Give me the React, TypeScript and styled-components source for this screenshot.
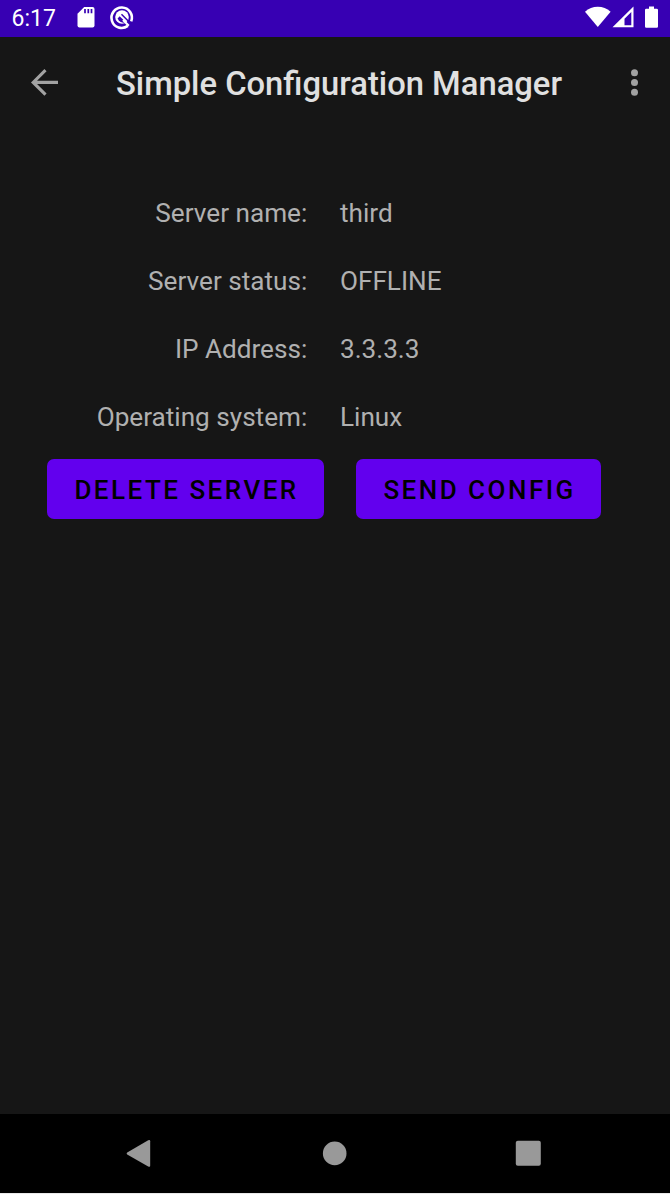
import React from "react";
import styled, { createGlobalStyle } from "styled-components";

const GlobalStyle = createGlobalStyle`
  * { box-sizing: border-box; }
  body { margin: 0; background: #e9e9e9; font-family: Roboto, sans-serif; }
`;

const Screen = styled.div`
  width: 670px;
  height: 1193px;
  display: flex;
  flex-direction: column;
  background: #161616;
  overflow: hidden;
`;

const StatusBar = styled.header`
  height: 37px;
  flex: none;
  display: flex;
  justify-content: space-between;
  background: #3700b3;
  color: #fff;
`;

const Clock = styled.span`
  width: 66px;
  padding-left: 11.5px;
  font-size: 23px;
  line-height: 37px;
`;

const StatusGroup = styled.div`
  display: flex;
`;

const AppBar = styled.div`
  height: 92px;
  flex: none;
  display: flex;
  align-items: center;
  justify-content: space-between;
  padding: 0 15px 2px 24px;
`;

const IconButton = styled.button`
  width: 40px;
  height: 40px;
  padding: 0;
  border: 0;
  background: none;
  color: #a2a2a2;
`;

const Title = styled.h1`
  flex: 1;
  margin: 0 0 0 52px;
  padding-top: 3px;
  color: #e0e0e0;
  font-size: 32.75px;
  line-height: 40px;
  font-weight: 500;
  white-space: nowrap;
`;

const Content = styled.main`
  flex: 1;
  padding-top: 49.5px;
`;

const Details = styled.dl`
  margin: 0;
  display: grid;
  grid-template-columns: 307.3px 1fr;
  grid-auto-rows: 68.1px;
  column-gap: 32.7px;
  color: #b0b0b0;
  font-size: 26.15px;
  line-height: 68px;
`;

const Label = styled.dt`
  text-align: right;
`;

const Value = styled.dd`
  margin: 0;
`;

const Actions = styled.div`
  display: flex;
  gap: 32.5px;
  padding: 8.1px 0 0 47.4px;
`;

const ActionButton = styled.button<{ $width: number }>`
  width: ${(p) => p.$width}px;
  height: 60px;
  padding: 3px 0 0 27px;
  border: 0;
  border-radius: 7px;
  background: #6200ee;
  color: #000;
  font: 500 26px Roboto, sans-serif;
  letter-spacing: 2.48px;
  text-align: left;
  white-space: nowrap;
`;

const NavBar = styled.nav`
  height: 79px;
  flex: none;
  display: flex;
  align-items: center;
  justify-content: space-between;
  padding: 0 122px 0 119px;
  background: #000;
`;

const NavButton = styled(IconButton)`
  color: #999;
`;

const details = [
  ["Server name:", "third"],
  ["Server status:", "OFFLINE"],
  ["IP Address:", "3.3.3.3"],
  ["Operating system:", "Linux"],
];

export default function App() {
  return (
    <>
      <GlobalStyle />
      <Screen>
        <StatusBar>
          <StatusGroup>
            <Clock>6:17</Clock>
            <svg width="80" height="37" fill="none">
              <path d="M18.2 7H26.5Q28.5 7 28.5 9V25.5Q28.5 27.5 26.5 27.5H13.5Q11.5 27.5 11.5 25.5V13.8Z" fill="#fff" />
              <path d="M19 9V13.2M22.3 9V13.2M25.5 9V13.2" stroke="#3700b3" strokeWidth="1.7" />
              <path d="M61.8 25.9A10.2 10.2 0 1 1 65.2 21.4" stroke="#fff" strokeWidth="2.6" />
              <circle cx="56" cy="17" r="6.8" fill="#fff" />
              <path d="M51.6 18.4L53.7 16.3L60 22.6Q54 23.5 51.6 18.4Z" fill="#3700b3" />
              <path d="M55.5 14.2L65 23.7" stroke="#3700b3" strokeWidth="1.5" />
              <path d="M57 20L62.8 25.8" stroke="#fff" strokeWidth="2.2" />
            </svg>
          </StatusGroup>
          <svg width="90" height="37">
            <path d="M17.8 27L5 11.8Q10.5 6.7 17.8 6.7T30.6 11.8Z" fill="#fff" />
            <path d="M32.5 27.3L53.5 6.6V27.3ZM44.5 25.2H51.3V12L44.5 18.7Z" fill="#fff" fillRule="evenodd" />
            <path d="M69 6.5H74V8.8H76.7Q78 8.8 78 10.1V26.4Q78 27.8 76.7 27.8H66.3Q65 27.8 65 26.4V10.1Q65 8.8 66.3 8.8H69Z" fill="#fff" />
          </svg>
        </StatusBar>
        <AppBar>
          <IconButton aria-label="Back">
            <svg width="40" height="40" fill="none" stroke="currentColor" strokeWidth="3.1">
              <path d="M34 20.4H9.5M21.5 8.2L9.2 20.4L21.5 32.6" />
            </svg>
          </IconButton>
          <Title>Simple Configuration Manager</Title>
          <IconButton aria-label="More options">
            <svg width="40" height="40" fill="currentColor">
              <circle cx="19.5" cy="10.7" r="3.5" />
              <circle cx="19.5" cy="20.5" r="3.5" />
              <circle cx="19.5" cy="30.2" r="3.5" />
            </svg>
          </IconButton>
        </AppBar>
        <Content>
          <Details>
            {details.map(([label, value]) => (
              <React.Fragment key={label}>
                <Label>{label}</Label>
                <Value>{value}</Value>
              </React.Fragment>
            ))}
          </Details>
          <Actions>
            <ActionButton $width={276.5}>DELETE SERVER</ActionButton>
            <ActionButton $width={245}>SEND CONFIG</ActionButton>
          </Actions>
        </Content>
        <NavBar>
          <NavButton aria-label="Back">
            <svg width="40" height="40" fill="currentColor">
              <path d="M8.2 18.5L29.2 6.2Q31.2 5.3 31.2 7.2V31.6Q31.2 33.5 29.2 32.4L8.2 20.4Q7 19.5 8.2 18.5Z" />
            </svg>
          </NavButton>
          <NavButton aria-label="Home">
            <svg width="40" height="40" fill="currentColor">
              <circle cx="20.7" cy="19.4" r="11.8" />
            </svg>
          </NavButton>
          <NavButton aria-label="Overview">
            <svg width="40" height="40" fill="currentColor">
              <rect x="7.8" y="6.8" width="25" height="25" rx="2" />
            </svg>
          </NavButton>
        </NavBar>
      </Screen>
    </>
  );
}
